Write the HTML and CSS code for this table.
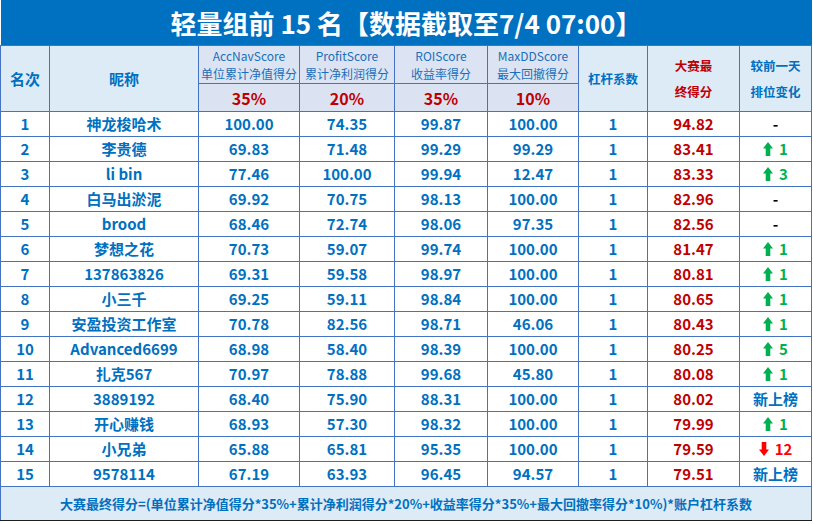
FILE: index.html
```html
<!DOCTYPE html>
<html lang="zh">
<head>
<meta charset="utf-8">
<title>轻量组前 15 名</title>
<link rel="stylesheet" href="styles.css">
</head>
<body>
<table class="board">
  <colgroup>
    <col class="c-rank"><col class="c-name"><col class="c-acc"><col class="c-profit"><col class="c-roi"><col class="c-dd"><col class="c-lev"><col class="c-final"><col class="c-chg">
  </colgroup>
  <thead>
    <tr class="title-row"><th colspan="9">轻量组前 15 名【数据截取至7/4 07:00】</th></tr>
    <tr class="head-row1">
      <th rowspan="2" class="h-main">名次</th>
      <th rowspan="2" class="h-main">昵称</th>
      <th class="h-score">AccNavScore<br>单位累计净值得分</th>
      <th class="h-score">ProfitScore<br>累计净利润得分</th>
      <th class="h-score">ROIScore<br>收益率得分</th>
      <th class="h-score">MaxDDScore<br>最大回撤得分</th>
      <th rowspan="2" class="h-small">杠杆系数</th>
      <th rowspan="2" class="h-small h-red">大赛最<br>终得分</th>
      <th rowspan="2" class="h-small">较前一天<br>排位变化</th>
    </tr>
    <tr class="head-row2">
      <th class="h-pct">35%</th>
      <th class="h-pct">20%</th>
      <th class="h-pct">35%</th>
      <th class="h-pct">10%</th>
    </tr>
  </thead>
  <tbody>
    <tr><td>1</td><td>神龙梭哈术</td><td>100.00</td><td>74.35</td><td>99.87</td><td>100.00</td><td>1</td><td class="final">94.82</td><td class="dash">-</td></tr>
    <tr><td>2</td><td>李贵德</td><td>69.83</td><td>71.48</td><td>99.29</td><td>99.29</td><td>1</td><td class="final">83.41</td><td class="up"><svg class="arrow" viewBox="0 0 10 14"><polygon points="5,0 10,6.5 7.3,6.5 7.3,14 2.7,14 2.7,6.5 0,6.5"/></svg>1</td></tr>
    <tr><td>3</td><td>li bin</td><td>77.46</td><td>100.00</td><td>99.94</td><td>12.47</td><td>1</td><td class="final">83.33</td><td class="up"><svg class="arrow" viewBox="0 0 10 14"><polygon points="5,0 10,6.5 7.3,6.5 7.3,14 2.7,14 2.7,6.5 0,6.5"/></svg>3</td></tr>
    <tr><td>4</td><td>白马出淤泥</td><td>69.92</td><td>70.75</td><td>98.13</td><td>100.00</td><td>1</td><td class="final">82.96</td><td class="dash">-</td></tr>
    <tr><td>5</td><td>brood</td><td>68.46</td><td>72.74</td><td>98.06</td><td>97.35</td><td>1</td><td class="final">82.56</td><td class="dash">-</td></tr>
    <tr><td>6</td><td>梦想之花</td><td>70.73</td><td>59.07</td><td>99.74</td><td>100.00</td><td>1</td><td class="final">81.47</td><td class="up"><svg class="arrow" viewBox="0 0 10 14"><polygon points="5,0 10,6.5 7.3,6.5 7.3,14 2.7,14 2.7,6.5 0,6.5"/></svg>1</td></tr>
    <tr><td>7</td><td>137863826</td><td>69.31</td><td>59.58</td><td>98.97</td><td>100.00</td><td>1</td><td class="final">80.81</td><td class="up"><svg class="arrow" viewBox="0 0 10 14"><polygon points="5,0 10,6.5 7.3,6.5 7.3,14 2.7,14 2.7,6.5 0,6.5"/></svg>1</td></tr>
    <tr><td>8</td><td>小三千</td><td>69.25</td><td>59.11</td><td>98.84</td><td>100.00</td><td>1</td><td class="final">80.65</td><td class="up"><svg class="arrow" viewBox="0 0 10 14"><polygon points="5,0 10,6.5 7.3,6.5 7.3,14 2.7,14 2.7,6.5 0,6.5"/></svg>1</td></tr>
    <tr><td>9</td><td>安盈投资工作室</td><td>70.78</td><td>82.56</td><td>98.71</td><td>46.06</td><td>1</td><td class="final">80.43</td><td class="up"><svg class="arrow" viewBox="0 0 10 14"><polygon points="5,0 10,6.5 7.3,6.5 7.3,14 2.7,14 2.7,6.5 0,6.5"/></svg>1</td></tr>
    <tr><td>10</td><td>Advanced6699</td><td>68.98</td><td>58.40</td><td>98.39</td><td>100.00</td><td>1</td><td class="final">80.25</td><td class="up"><svg class="arrow" viewBox="0 0 10 14"><polygon points="5,0 10,6.5 7.3,6.5 7.3,14 2.7,14 2.7,6.5 0,6.5"/></svg>5</td></tr>
    <tr><td>11</td><td>扎克567</td><td>70.97</td><td>78.88</td><td>99.68</td><td>45.80</td><td>1</td><td class="final">80.08</td><td class="up"><svg class="arrow" viewBox="0 0 10 14"><polygon points="5,0 10,6.5 7.3,6.5 7.3,14 2.7,14 2.7,6.5 0,6.5"/></svg>1</td></tr>
    <tr><td>12</td><td>3889192</td><td>68.40</td><td>75.90</td><td>88.31</td><td>100.00</td><td>1</td><td class="final">80.02</td><td class="new">新上榜</td></tr>
    <tr><td>13</td><td>开心赚钱</td><td>68.93</td><td>57.30</td><td>98.32</td><td>100.00</td><td>1</td><td class="final">79.99</td><td class="up"><svg class="arrow" viewBox="0 0 10 14"><polygon points="5,0 10,6.5 7.3,6.5 7.3,14 2.7,14 2.7,6.5 0,6.5"/></svg>1</td></tr>
    <tr><td>14</td><td>小兄弟</td><td>65.88</td><td>65.81</td><td>95.35</td><td>100.00</td><td>1</td><td class="final">79.59</td><td class="down"><svg class="arrow" viewBox="0 0 10 14"><polygon points="2.7,0 7.3,0 7.3,7.5 10,7.5 5,14 0,7.5 2.7,7.5"/></svg>12</td></tr>
    <tr><td>15</td><td>9578114</td><td>67.19</td><td>63.93</td><td>96.45</td><td>94.57</td><td>1</td><td class="final">79.51</td><td class="new">新上榜</td></tr>
  </tbody>
  <tfoot>
    <tr class="foot-row"><td colspan="9">大赛最终得分=(单位累计净值得分*35%+累计净利润得分*20%+收益率得分*35%+最大回撤率得分*10%)*账户杠杆系数</td></tr>
  </tfoot>
</table>
</body>
</html>
```

FILE: styles.css
```css
html, body {
  margin: 0;
  padding: 0;
  background: #ffffff;
}

.board {
  border-collapse: collapse;
  table-layout: fixed;
  width: 811px;
  font-family: "Noto Sans CJK SC", "Noto Sans", sans-serif;
  color: #0070c0;
}

.c-rank { width: 49px; }
.c-name { width: 149px; }
.c-acc { width: 101px; }
.c-profit { width: 95px; }
.c-roi { width: 93px; }
.c-dd { width: 91px; }
.c-lev { width: 69px; }
.c-final { width: 92px; }
.c-chg { width: 72px; }

.board th,
.board td {
  border: 1px solid #4472c4;
  text-align: center;
  padding: 0;
  white-space: nowrap;
}

.title-row th {
  height: 45px;
  background: #0070c0;
  color: #ffffff;
  font-size: 26px;
  font-weight: 700;
  border: none;
  border-bottom: 1px solid #4472c4;
  line-height: 30px;
}

.head-row1 th {
  height: 37px;
  background: #ddebf7;
}

.h-main {
  font-size: 15px;
  font-weight: 700;
}

.h-score {
  background: #dce4f3 !important;
  font-size: 12px;
  font-weight: 400;
  line-height: 18px;
  color: #1a6fb8;
}

.h-small {
  font-size: 12.5px;
  font-weight: 700;
  line-height: 26px;
}

.h-red {
  color: #c00000;
}

.head-row2 th {
  height: 27px;
  background: #dbe2f2;
}

.h-pct {
  color: #c00000;
  font-size: 16px;
  font-weight: 700;
}

.board tbody td {
  height: 24px;
  background: #ffffff;
  font-size: 15px;
  font-weight: 700;
  line-height: 18px;
}

.board tbody td.final {
  color: #c00000;
}

.board tbody td.dash {
  color: #000000;
  font-weight: 700;
}

.board tbody td.up {
  color: #00b050;
}

.board tbody td.down {
  color: #ff0000;
}

.arrow {
  width: 10px;
  height: 14px;
  margin-right: 6px;
  vertical-align: -1px;
  fill: currentColor;
}

.foot-row td {
  height: 33px;
  background: #ddebf7;
  font-size: 13px;
  font-weight: 700;
  border-bottom: 1px solid #1f1f1f;
}
```
